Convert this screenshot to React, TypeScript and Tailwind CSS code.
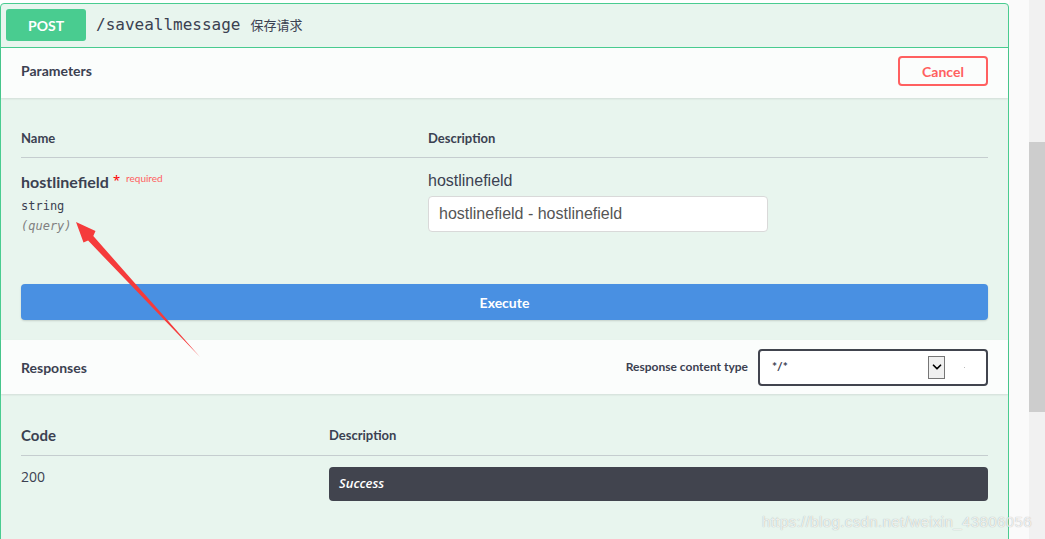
import { ChevronDown } from 'lucide-react';

// swagger-ish "try it out" block for POST /saveallmessage
const heading = { fontFamily: 'Lato, "Open Sans", sans-serif' };
const mono = { fontFamily: '"DejaVu Sans Mono", monospace' };
const body = { fontFamily: '"Open Sans", sans-serif' };
const arial = { fontFamily: '"Liberation Sans", Arial, sans-serif' };

const Arrow = () => (
  <svg className="pointer-events-none absolute left-0 top-0" width="1045" height="539" viewBox="0 0 1045 539">
    <polygon
      points="76,222 95.5,231 93.3,236 200,357 88.1,240.6 83.5,242.5"
      fill="#f53b3b"
    />
  </svg>
);

const App = () => {
  return (
    <div className="relative flex h-[539px] w-[1045px] overflow-hidden bg-white text-[#3b4151]">
      {/* operation block */}
      <div className="w-[1009px] shrink-0 pt-[3px]">
        <div className="h-[600px] rounded-t-[4px] border border-[#49cc90] bg-[#e8f5ee]">
          {/* summary */}
          <div className="flex h-[44px] items-start border-b border-[#49cc90] px-[5px] pt-[5px]">
            <div
              className="flex h-[32px] w-[80px] items-center justify-center rounded-[3px] bg-[#49cc90] text-[14px] font-bold text-white"
              style={heading}
            >
              POST
            </div>
            <div className="ml-[10px] flex h-[32px] items-center">
              <span className="text-[16px] text-[#3b4151]" style={mono}>/saveallmessage</span>
              <span className="ml-[10px] text-[13px] text-[#3b4151]" style={{ fontFamily: '"Noto Sans CJK SC", sans-serif' }}>
                保存请求
              </span>
            </div>
          </div>

          {/* parameters header */}
          <div className="flex h-[50px] items-start justify-between bg-[#fbfdfc] px-[20px] pt-[8px] shadow-[0_1px_2px_rgba(0,0,0,0.1)]">
            <div className="text-[14px] font-bold leading-[30px]" style={heading}>Parameters</div>
            <button
              className="h-[30px] w-[90px] rounded-[4px] border-2 border-[#ff6060] bg-transparent text-[14px] font-bold text-[#ff6060]"
              style={heading}
            >
              Cancel
            </button>
          </div>

          {/* parameters table */}
          <div className="px-[20px] pt-[32px]">
            <div className="flex border-b border-[#c5cdcf] pb-[11px] text-[13px] font-bold leading-[16px]" style={heading}>
              <div className="w-[407px]">Name</div>
              <div>Description</div>
            </div>
            <div className="flex pt-[13px]">
              <div className="w-[407px]">
                <div className="flex items-start">
                  <span className="text-[16px] font-bold leading-[22px]" style={heading}>hostlinefield</span>
                  <span className="ml-[4px] text-[13px] leading-[18px] text-[#ff0000]">*</span>
                  <span className="ml-[6px] text-[10px] leading-[14px] text-[#ff6060]" style={heading}>required</span>
                </div>
                <div className="mt-[4px] text-[12px] leading-[18px]" style={mono}>string</div>
                <div className="mt-[2px] text-[12px] italic leading-[18px] text-[#808080]" style={mono}>(query)</div>
              </div>
              <div>
                <div className="text-[16px] leading-[20px] text-[#3b4151]" style={arial}>hostlinefield</div>
                <div
                  className="mt-[5px] flex h-[36px] w-[340px] items-center rounded-[4px] border border-[#d9d9d9] bg-white px-[10px] text-[16px] text-[#555]"
                  style={arial}
                >
                  hostlinefield - hostlinefield
                </div>
              </div>
            </div>
            <button
              className="mt-[49px] flex h-[36px] w-full items-center justify-center rounded-[4px] bg-[#4990e2] text-[14px] font-bold text-white shadow-[0_1px_2px_rgba(0,0,0,0.15)]"
              style={heading}
            >
              Execute
            </button>
          </div>

          {/* responses header */}
          <div className="mt-[20px] flex h-[54px] items-center justify-between bg-[#fbfdfc] px-[20px] shadow-[0_1px_2px_rgba(0,0,0,0.1)]">
            <div className="text-[14px] font-bold" style={heading}>Responses</div>
            <div className="flex items-center">
              <span className="mr-[10px] text-[12px] font-bold" style={heading}>Response content type</span>
              <div className="flex h-[37px] w-[230px] items-center rounded-[4px] border-2 border-[#41444e] bg-white pl-[12px]">
                <span className="text-[12px] font-bold" style={heading}>*/*</span>
                <div className="ml-auto flex h-[23px] w-[17px] items-center justify-center border border-[#767676] bg-[#f0f0f0]">
                  <ChevronDown size={14} strokeWidth={3} color="#000" />
                </div>
                <div className="ml-[19px] mr-[21px] h-[1px] w-[1px] bg-[#bbb]" />
              </div>
            </div>
          </div>

          {/* responses table */}
          <div className="px-[20px] pt-[33px]">
            <div className="flex items-center border-b border-[#c5cdcf] pb-[12px] font-bold leading-[16px]" style={heading}>
              <div className="w-[308px] text-[15px]">Code</div>
              <div className="text-[13px]">Description</div>
            </div>
            <div className="flex pt-[11px]">
              <div className="w-[308px] text-[14px] leading-[20px]" style={body}>200</div>
              <div className="flex h-[34px] flex-1 items-center rounded-[4px] bg-[#41444e] px-[10px] text-[13px] font-semibold italic text-white" style={body}>
                Success
              </div>
            </div>
          </div>
        </div>
      </div>

      {/* scrollbar */}
      <div className="w-[20px] shrink-0 bg-[#fafafa]" />
      <div className="w-[16px] shrink-0 bg-[#f1f1f1] pt-[142px]">
        <div className="h-[270px] w-full bg-[#cdcdcd]" />
      </div>

      <Arrow />

      <div
        className="pointer-events-none absolute left-[762px] top-[511px] whitespace-nowrap text-[15px] tracking-[0.4px] text-white/80 [text-shadow:0_0_1px_rgba(0,0,0,0.35)]"
        style={arial}
      >
        https://blog.csdn.net/weixin_43806056
      </div>
    </div>
  );
};

export default App;
